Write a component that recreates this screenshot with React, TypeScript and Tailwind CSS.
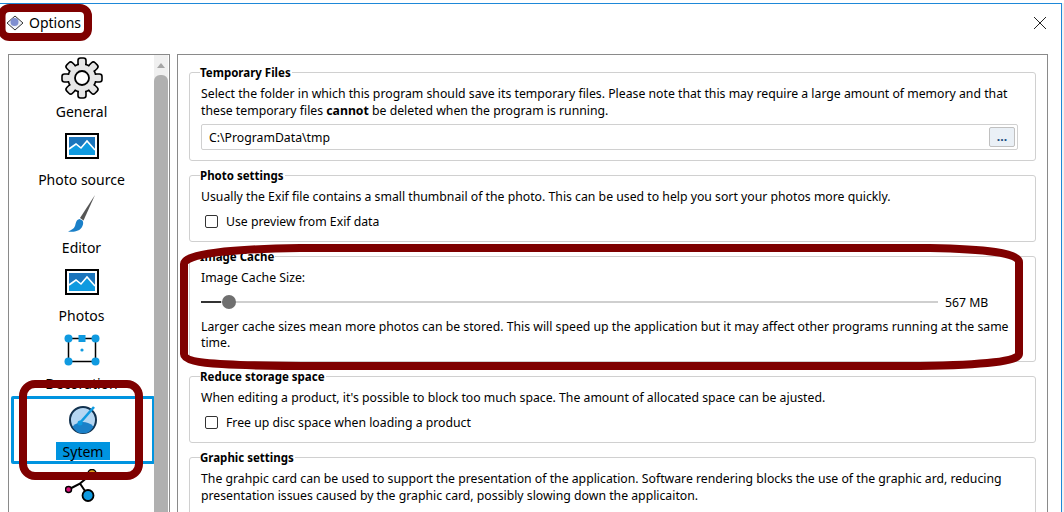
import React from 'react';

const Mountain: React.FC = () => (
  <svg width="34" height="26" viewBox="0 0 34 26">
    <rect x="1" y="1" width="32" height="24" fill="#fff" stroke="#000" strokeWidth="2" />
    <rect x="4" y="4" width="26" height="18" fill="#1b75bc" />
    <path d="M4 22V15L11 10L16 14L22 7L30 16V22Z" fill="#0f9ae0" />
    <path d="M4 16L11 11L16 15L22 8L30 17" fill="none" stroke="#fff" strokeWidth="1.6" />
  </svg>
);

const Gear: React.FC = () => {
  const teeth = [0, 45, 90, 135, 180, 225, 270, 315];
  return (
    <svg width="42" height="42" viewBox="0 0 42 42">
      {teeth.map((a) => (
        <rect
          key={a}
          x="17"
          y="1"
          width="8"
          height="9"
          rx="2.5"
          fill="#e6e6e6"
          stroke="#000"
          strokeWidth="1.6"
          transform={`rotate(${a} 21 21)`}
        />
      ))}
      <circle cx="21" cy="21" r="14" fill="#e6e6e6" stroke="#000" strokeWidth="1.6" />
      {teeth.map((a) => (
        <rect key={a} x="18" y="5" width="6" height="7" fill="#e6e6e6" transform={`rotate(${a} 21 21)`} />
      ))}
      <circle cx="21" cy="21" r="7" fill="#fff" stroke="#000" strokeWidth="1.8" />
    </svg>
  );
};

const Brush: React.FC = () => (
  <svg width="30" height="38" viewBox="0 0 30 38">
    <path d="M28 0L13 23L16.5 25.5Z" fill="#555" />
    <path d="M12.5 24C9 25 9 28 8 31C7 34 4 35 1 36.5C7 37.5 13 36 15 32C16.5 29 16.5 27 15.5 25.5Z" fill="#1b80c8" />
  </svg>
);

const Decoration: React.FC = () => (
  <svg width="36" height="32" viewBox="0 0 36 32">
    <rect x="4.5" y="4.5" width="27" height="23" fill="#fff" stroke="#000" strokeWidth="1.5" />
    <circle cx="4.5" cy="4.5" r="4" fill="#0f9ae0" />
    <circle cx="31.5" cy="4.5" r="4" fill="#0f9ae0" />
    <circle cx="4.5" cy="27.5" r="4" fill="#0f9ae0" />
    <circle cx="31.5" cy="27.5" r="4" fill="#0f9ae0" />
    <rect x="14.5" y="1" width="7" height="7" fill="#0f9ae0" />
    <circle cx="18" cy="16" r="1.6" fill="#0f9ae0" />
  </svg>
);

const Gauge: React.FC = () => (
  <svg width="30" height="30" viewBox="0 0 30 30">
    <circle cx="15" cy="15" r="13" fill="#b5d6f2" stroke="#12324f" strokeWidth="2" />
    <path d="M4.5 21.5A11.5 11.5 0 0 0 25.5 21.5C22 18 18 17 15 17C12 17 8 18 4.5 21.5Z" fill="#1b80c8" />
    <path d="M11 19L26 2" stroke="#0f9ae0" strokeWidth="2.6" />
    <circle cx="12" cy="18" r="2.5" fill="#0f9ae0" />
  </svg>
);

const Nodes: React.FC = () => (
  <svg width="34" height="34" viewBox="0 0 34 34">
    <path d="M3.5 20.5L15 14.5L23 26.5M15 14.5L27 4.5" stroke="#000" strokeWidth="2" fill="none" />
    <circle cx="27" cy="4.5" r="4" fill="#e09a1a" stroke="#000" strokeWidth="1.5" />
    <circle cx="3.5" cy="20.5" r="3" fill="#d9127a" stroke="#000" strokeWidth="1.5" />
    <circle cx="23" cy="26.5" r="5.5" fill="#0f9ae0" stroke="#000" strokeWidth="1.8" />
  </svg>
);

// last entry's label is below the fold in the screenshot, so it has none
const navItems: { label?: string; icon: React.ReactNode; selected?: boolean }[] = [
  { label: 'General', icon: <Gear /> },
  { label: 'Photo source', icon: <Mountain /> },
  { label: 'Editor', icon: <Brush /> },
  { label: 'Photos', icon: <Mountain /> },
  { label: 'Decoration', icon: <Decoration /> },
  { label: 'Sytem', icon: <Gauge />, selected: true },
  { icon: <Nodes /> },
];

const Group: React.FC<{ title: string; children: React.ReactNode; className?: string }> = ({
  title,
  children,
  className,
}) => (
  <fieldset className={`border border-[#d0d0d0] rounded-[3px] px-[11px] ${className ?? ''}`}>
    <legend className="-ml-[1px] font-bold text-[11.5px] leading-[15px] text-black pr-[1px]">{title}</legend>
    {children}
  </fieldset>
);

const Check: React.FC<{ label: string }> = ({ label }) => (
  <label className="flex items-center gap-[8px] ml-[4px]">
    <span className="w-[13px] h-[13px] border border-[#333] rounded-[2px] bg-white" />
    <span>{label}</span>
  </label>
);

export default function App() {
  return (
    <div
      className="relative w-[1064px] h-[512px] overflow-hidden bg-[#f2f2f2] text-[12.25px] leading-[17px] text-black"
      style={{ fontFamily: '"Noto Sans", "Open Sans", sans-serif' }}
    >
      <div className="h-[3px] overflow-hidden bg-white pl-[78px]">
        <div className="-mt-[12px] text-[13px] leading-[15px] text-[#666]">Calendars</div>
      </div>
      <div className="h-[509px] w-[1062px] border-t border-r border-[#1e88d8] bg-white flex flex-col">
        <div className="h-[50px] shrink-0 flex items-center justify-between pl-[6px] pr-[14px] pb-[12px]">
          <div className="flex items-center gap-[5px]">
            <svg width="18" height="16" viewBox="0 0 18 16">
              <path d="M1 8L9 1L17 8L9 15Z" fill="#eef1f6" stroke="#333" strokeWidth="1" />
              <circle cx="8.5" cy="7" r="4" fill="#7f8fd0" />
            </svg>
            <span className="text-[14px] leading-[18px]">Options</span>
          </div>
          <svg width="14" height="14" viewBox="0 0 14 14">
            <path d="M1 1L13 13M13 1L1 13" stroke="#222" strokeWidth="1" />
          </svg>
        </div>
        <div className="flex-1 min-h-0 flex gap-[7px] pl-[8px] pr-[13px]">
          <div className="w-[162px] shrink-0 border border-b-0 border-[#8a8a8a] flex">
            <div className="flex-1 pt-[1px] min-w-0 overflow-hidden">
              {navItems.map((item, i) => (
                <div
                  key={i}
                  className={`h-[68px] flex flex-col items-center text-[14px] rounded-[2px] ${
                    item.selected ? 'border-[3px] border-[#0094e0] ml-[2px] -mr-[1px] pt-[1px]' : 'pt-[2px]'
                  }`}
                >
                  <div className="h-[39px] flex items-center justify-center">{item.icon}</div>
                  {item.label && (
                    <span
                      className={
                        item.selected
                          ? 'mt-[3px] bg-[#0094e0] px-[7px] pt-[1px] leading-[17px]'
                          : 'mt-[6px] px-[6px] leading-[18px]'
                      }
                    >
                      {item.label}
                    </span>
                  )}
                </div>
              ))}
            </div>
            <div className="w-[14px] shrink-0 bg-[#f0f0f0] flex flex-col items-center mr-[1px]">
              <svg width="10" height="20" viewBox="0 0 10 20">
                <path d="M1 13L5 8L9 13Z" fill="#a6a6a6" />
              </svg>
              <div className="flex-1 w-full bg-[#b0b0b0] rounded-t-[6px]" />
            </div>
          </div>
          <div className="flex-1 min-w-0 border border-b-0 border-[#8a8a8a] pl-[11px] pr-[11px] pt-[10px] flex flex-col gap-[7px] overflow-hidden">
            <Group title="Temporary Files" className="h-[96px] shrink-0">
              <p className="mt-[5px] whitespace-nowrap">
                Select the folder in which this program should save its temporary files. Please note that this may require a large amount of memory and that
              </p>
              <p className="whitespace-nowrap">
                these temporary files <b>cannot</b> be deleted when the program is running.
              </p>
              <div className="mt-[5px] mr-[6px] h-[26px] border border-[#d0d0d0] rounded-[2px] flex items-center justify-between pl-[7px] pr-[2px]">
                <span>C:\ProgramData\tmp</span>
                <span className="w-[26px] h-[20px] border border-[#c0c0c0] rounded-[2px] bg-[#eaf0f6] flex items-center justify-center font-bold text-[#1a4a80] leading-[14px]">
                  ...
                </span>
              </div>
            </Group>
            <Group title="Photo settings" className="h-[74px] shrink-0">
              <p className="mt-[5px] whitespace-nowrap">
                Usually the Exif file contains a small thumbnail of the photo. This can be used to help you sort your photos more quickly.
              </p>
              <div className="mt-[8px]">
                <Check label="Use preview from Exif data" />
              </div>
            </Group>
            <Group title="Image Cache" className="h-[113px] shrink-0">
              <p className="mt-[5px]">Image Cache Size:</p>
              <div className="mt-[9px] flex items-center gap-[7px] h-[14px]">
                <div className="relative flex-1 h-[2px] bg-[#cfcfcf]">
                  <div className="w-[20px] h-[2px] bg-[#333]" />
                  <div className="absolute left-[21px] top-[-6px] w-[14px] h-[14px] rounded-full bg-[#6f6f6f]" />
                </div>
                <span className="w-[79px] shrink-0 whitespace-nowrap">567 MB</span>
              </div>
              <p className="mt-[10px] mr-[10px] leading-[16px]">
                Larger cache sizes mean more photos can be stored. This will speed up the application but it may affect other programs running at the same time.
              </p>
            </Group>
            <Group title="Reduce storage space" className="h-[74px] shrink-0">
              <p className="mt-[5px] whitespace-nowrap">
                When editing a product, it's possible to block too much space. The amount of allocated space can be ajusted.
              </p>
              <div className="mt-[8px]">
                <Check label="Free up disc space when loading a product" />
              </div>
            </Group>
            <Group title="Graphic settings" className="h-[74px] shrink-0">
              <p className="mt-[5px] whitespace-nowrap">
                The grahpic card can be used to support the presentation of the application. Software rendering blocks the use of the graphic ard, reducing
              </p>
              <p className="whitespace-nowrap">
                presentation issues caused by the graphic card, possibly slowing down the applicaiton.
              </p>
            </Group>
          </div>
        </div>
      </div>

      {/* red marker annotations painted over the screenshot */}
      <svg className="absolute inset-0 pointer-events-none" width="1064" height="512" viewBox="0 0 1064 512" fill="none">
        <rect x="1.5" y="8" width="86.5" height="29" rx="8" stroke="#7f0000" strokeWidth="8" />
        <rect x="23" y="384" width="116" height="92" rx="12" stroke="#7f0000" strokeWidth="8" />
        <path
          d="M184 264C184 254 230 249 300 248L930 248C985 249 1019 253 1019 262L1019 354C1019 361 985 365 920 366L320 366C240 366 184 365 184 354Z"
          stroke="#7f0000"
          strokeWidth="8"
        />
      </svg>
    </div>
  );
}
